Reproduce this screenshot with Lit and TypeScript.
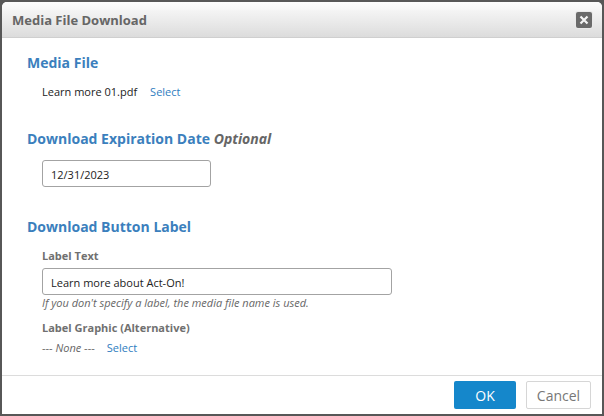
import { LitElement, html, css } from "lit";
import { customElement } from "lit/decorators.js";

@customElement("app-root")
export class AppRoot extends LitElement {
  static styles = css`
    :host {
      display: block;
      width: 604px;
      height: 416px;
      background: #575757;
      box-sizing: border-box;
      padding: 2px;
      font-family: "Open Sans", sans-serif;
      font-size: 11px;
      color: #222;
    }
    .dialog {
      height: 412px;
      background: #fff;
      border-radius: 5px 5px 0 0;
      display: flex;
      flex-direction: column;
      overflow: hidden;
    }
    .header {
      height: 36px;
      flex: none;
      box-sizing: border-box;
      border-bottom: 1px solid #cfcfcf;
      background: linear-gradient(#fcfcfc, #dcdcdc);
      display: flex;
      align-items: center;
      justify-content: space-between;
      padding: 0 10px;
    }
    .title {
      font-size: 13px;
      font-weight: 700;
      color: #666;
    }
    .close {
      width: 16px;
      height: 16px;
      border-radius: 2px;
      background: #6a6a6a;
      box-shadow: 0 0 0 1px #e9e9e9;
      display: flex;
      align-items: center;
      justify-content: center;
    }
    .body {
      flex: 1;
      padding: 15px 25px 0;
      display: flex;
      flex-direction: column;
    }
    h2 {
      margin: 0;
      font-size: 14px;
      line-height: 20px;
      font-weight: 700;
      color: #3b7fbd;
    }
    h2 em {
      color: #666;
    }
    .indent {
      padding-left: 15px;
    }
    .row {
      display: flex;
      line-height: 16px;
    }
    .file {
      margin-top: 11px;
      gap: 13px;
    }
    .link {
      color: #2f7dc0;
    }
    .s2 {
      margin-top: 29px;
    }
    .s3 {
      margin-top: 30px;
    }
    .input {
      box-sizing: border-box;
      height: 27px;
      border: 1px solid #a3a3a3;
      border-radius: 3px;
      padding: 1px 8px 0;
      display: flex;
      align-items: center;
      background: #fff;
    }
    .date {
      width: 169px;
      margin-top: 11px;
    }
    .text {
      width: 350px;
      margin-top: 4px;
    }
    .label {
      font-weight: 700;
      color: #707070;
      line-height: 16px;
    }
    .first {
      margin-top: 11px;
    }
    .hint {
      font-style: italic;
      color: #666;
      line-height: 16px;
    }
    .graphic {
      margin-top: 9px;
    }
    .none {
      margin-top: 4px;
      gap: 12px;
      color: #666;
    }
    .none i {
      font-style: italic;
    }
    .footer {
      height: 39px;
      flex: none;
      box-sizing: border-box;
      border-top: 1px solid #dcdcdc;
      display: flex;
      align-items: center;
      justify-content: flex-end;
      gap: 10px;
      padding: 0 11px 0 0;
    }
    .btn {
      box-sizing: border-box;
      height: 28px;
      border-radius: 2px;
      display: flex;
      align-items: center;
      justify-content: center;
      font-size: 14px;
    }
    .ok {
      width: 62px;
      background: #1587cb;
      color: #fff;
    }
    .cancel {
      width: 65px;
      border: 1px solid #d6d6d6;
      color: #777;
    }
  `;

  render() {
    return html`
      <div class="dialog">
        <div class="header">
          <div class="title">Media File Download</div>
          <div class="close">
            <svg width="10" height="10" viewBox="0 0 10 10">
              <path d="M1.5 1.5L8.5 8.5M8.5 1.5L1.5 8.5" stroke="#f4f4f4" stroke-width="2.2" fill="none" />
            </svg>
          </div>
        </div>
        <div class="body">
          <h2>Media File</h2>
          <div class="indent">
            <div class="row file"><span>Learn more 01.pdf</span><span class="link">Select</span></div>
          </div>
          <h2 class="s2">Download Expiration Date <em>Optional</em></h2>
          <div class="indent">
            <div class="input date">12/31/2023</div>
          </div>
          <h2 class="s3">Download Button Label</h2>
          <div class="indent">
            <div class="label first">Label Text</div>
            <div class="input text">Learn more about Act-On!</div>
            <div class="hint">If you don't specify a label, the media file name is used.</div>
            <div class="label graphic">Label Graphic (Alternative)</div>
            <div class="row none"><span>--- <i>None</i> ---</span><span class="link">Select</span></div>
          </div>
        </div>
        <div class="footer">
          <div class="btn ok">OK</div>
          <div class="btn cancel">Cancel</div>
        </div>
      </div>
    `;
  }
}
